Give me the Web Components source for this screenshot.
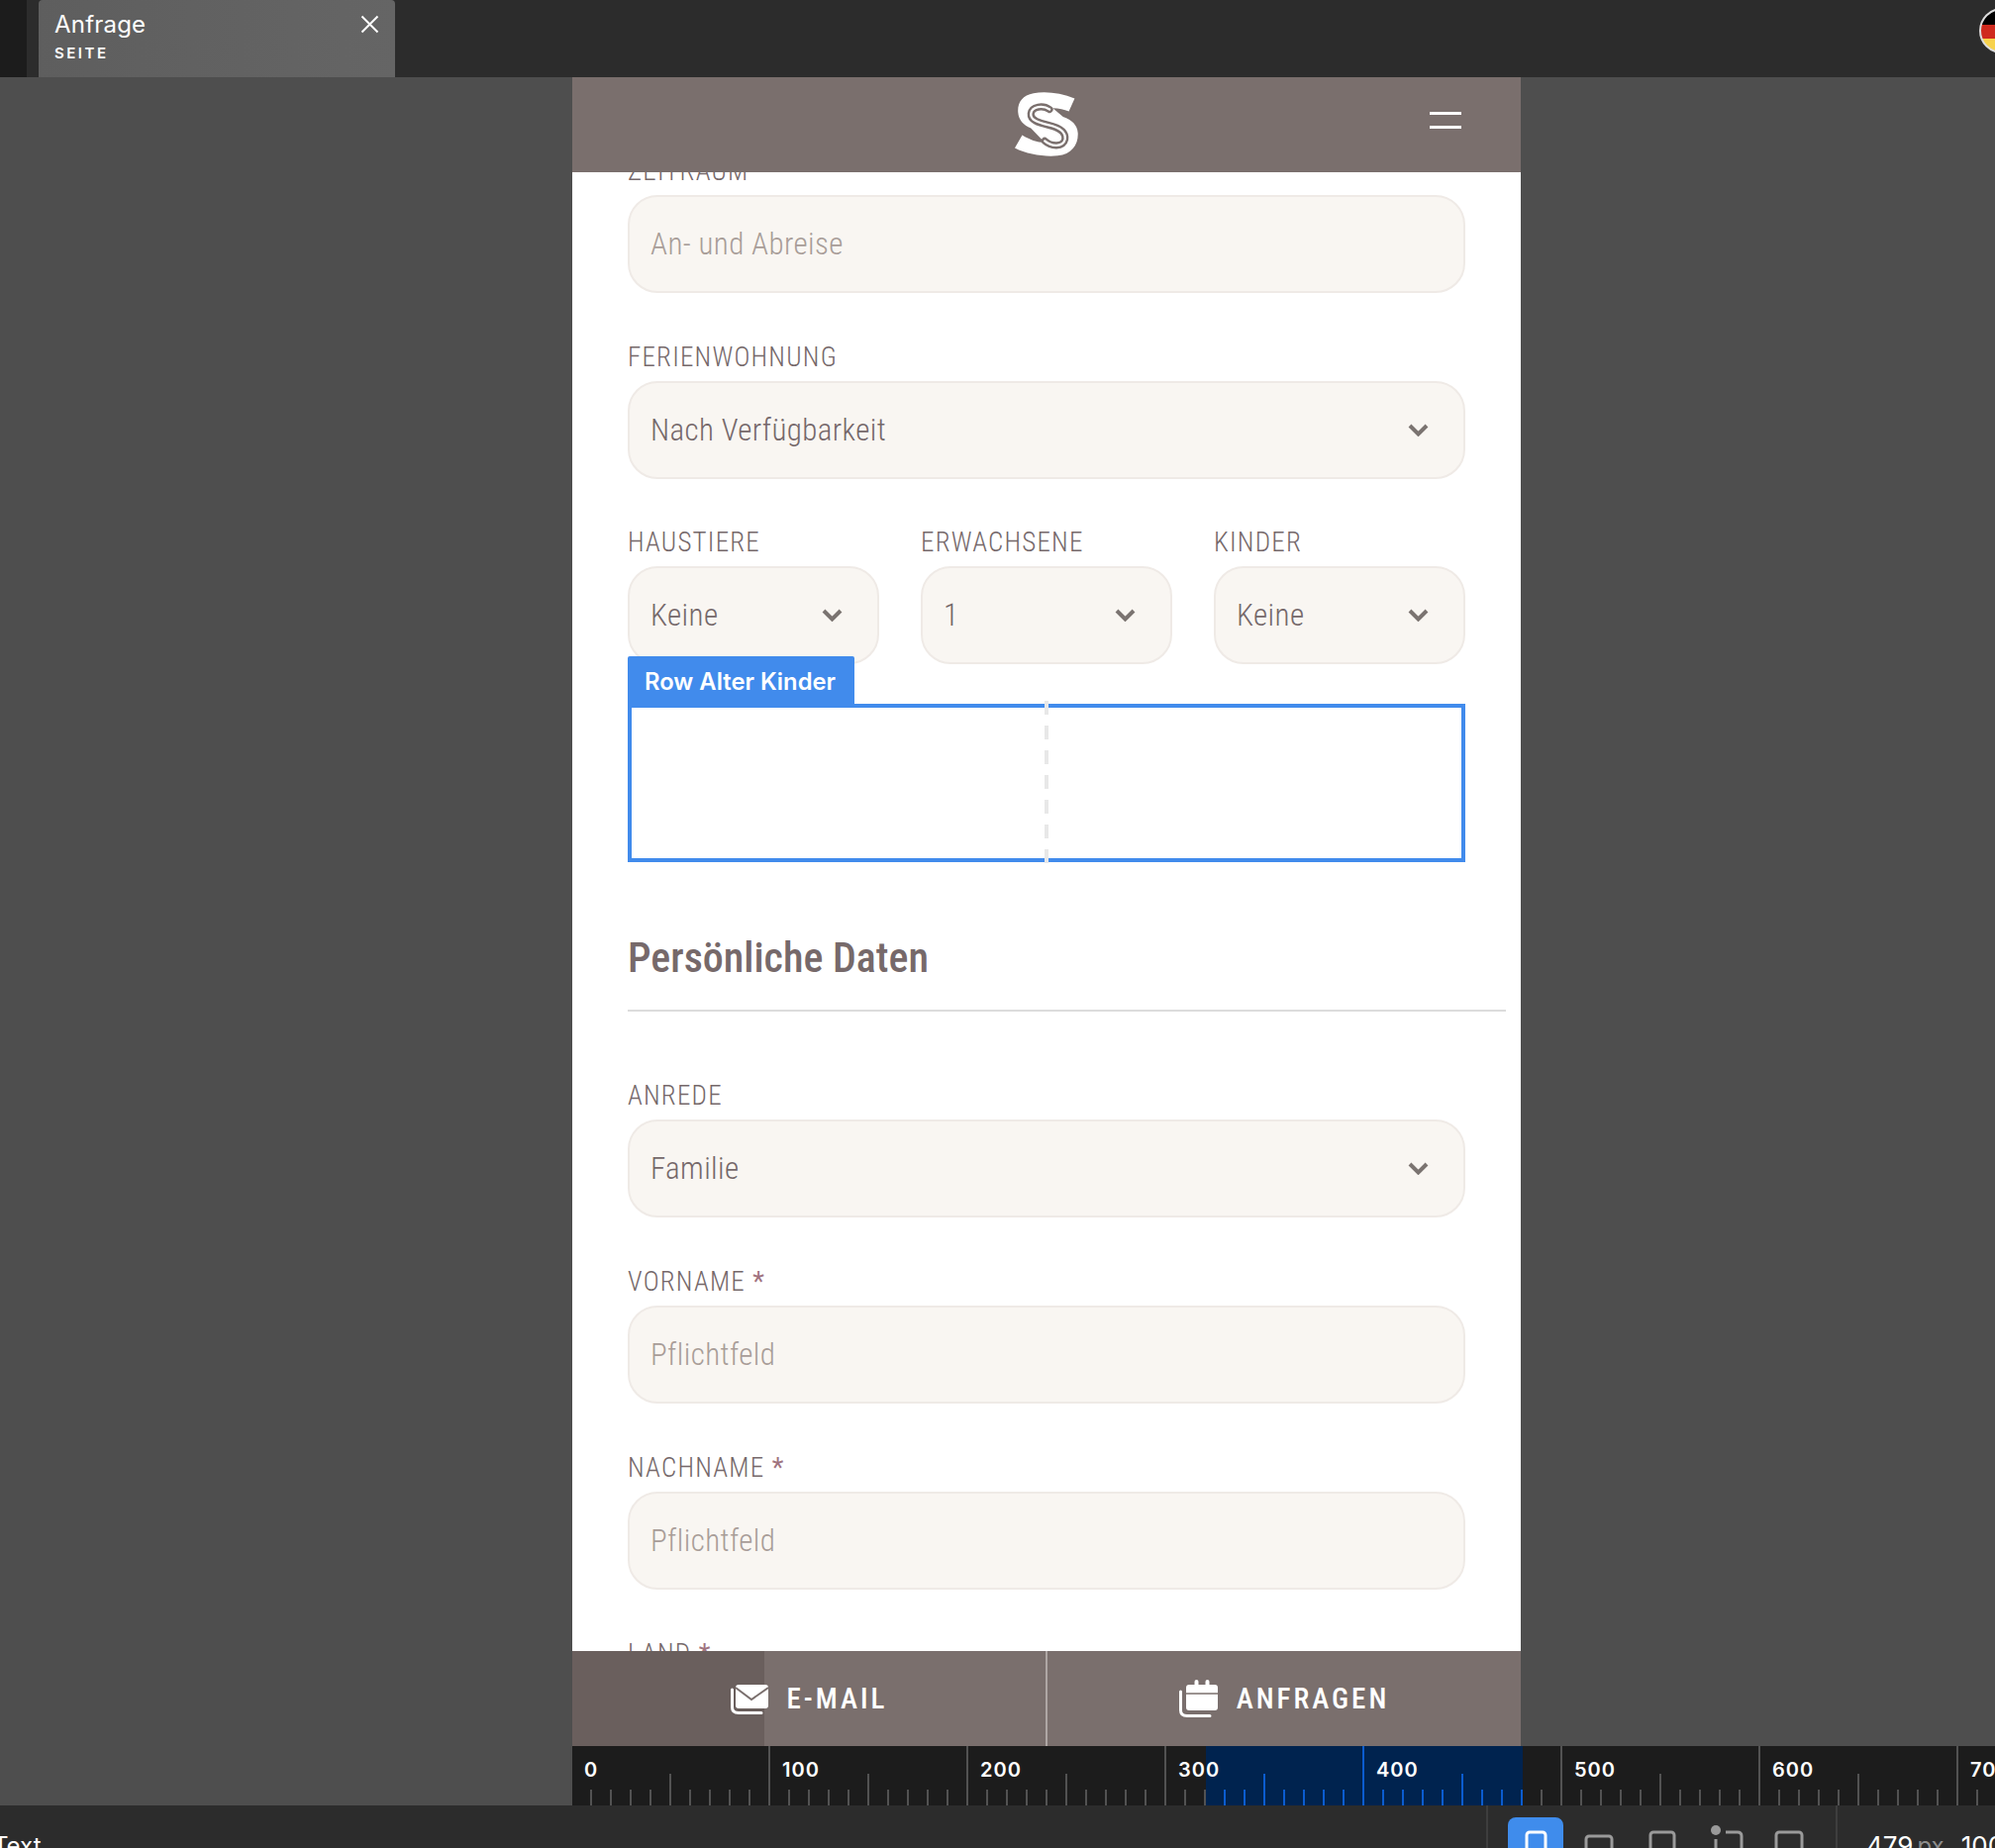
<!DOCTYPE html>
<html lang="de">
<head>
<meta charset="utf-8">
<title>Anfrage</title>
<style>
  html, body { margin: 0; padding: 0; background: #4e4e4e; overflow: hidden; }
</style>
</head>
<body>
<ds-editor>
  <ds-topbar slot="top">
    <ds-tab name="Anfrage" kind="SEITE"></ds-tab>
  </ds-topbar>
  <st-phone slot="phone">
    <st-field label="Zeitraum" placeholder="An- und Abreise"></st-field>
    <st-field label="Ferienwohnung" value="Nach Verfügbarkeit" select></st-field>
    <st-columns>
      <st-field label="Haustiere" value="Keine" select></st-field>
      <st-field label="Erwachsene" value="1" select></st-field>
      <st-field label="Kinder" value="Keine" select></st-field>
    </st-columns>
    <st-rowbox name="Row Alter Kinder"></st-rowbox>
    <st-heading>Persönliche Daten</st-heading>
    <st-field label="Anrede" value="Familie" select></st-field>
    <st-field label="Vorname" placeholder="Pflichtfeld" required></st-field>
    <st-field label="Nachname" placeholder="Pflichtfeld" required></st-field>
    <st-field label="Land" required></st-field>
  </st-phone>
  <ds-ruler slot="ruler"></ds-ruler>
  <ds-bottombar slot="bottom"></ds-bottombar>
</ds-editor>

<script>
const CONDENSED = `font-family: Roboto, 'Liberation Sans', sans-serif; font-stretch: 75%;`;
const UI_FONT = `font-family: Inter, 'Liberation Sans', sans-serif;`;

class Base extends HTMLElement {
  constructor() {
    super();
    this.attachShadow({ mode: "open" });
  }
  connectedCallback() {
    this.shadowRoot.innerHTML = `<style>${this.css()}</style>${this.html()}`;
  }
}

class DsEditor extends Base {
  css() {
    return `
      :host { display: flex; flex-direction: column; width: 2015px; height: 1867px; overflow: hidden; }
      .main { flex: 1; min-height: 0; display: flex; flex-direction: column; padding-left: 578px; background: #4e4e4e; }
    `;
  }
  html() {
    return `
      <slot name="top"></slot>
      <div class="main">
        <slot name="phone"></slot>
        <slot name="ruler"></slot>
      </div>
      <slot name="bottom"></slot>
    `;
  }
}

class DsTopbar extends Base {
  css() {
    return `
      :host { display: flex; height: 78px; flex: none; background: #2c2c2c; overflow: hidden; }
      .grip { width: 27px; background: #1c1c1c; margin-right: 12px; }
      svg { margin-left: auto; margin-top: 8px; margin-right: -30px; flex: none; }
    `;
  }
  html() {
    return `
      <div class="grip"></div>
      <slot></slot>
      <svg width="46" height="46" viewBox="0 0 46 46">
        <defs><clipPath id="c"><circle cx="23" cy="23" r="22"/></clipPath></defs>
        <g clip-path="url(#c)">
          <rect width="46" height="17" fill="#000"/>
          <rect y="17" width="46" height="14" fill="#cf2a1e"/>
          <rect y="31" width="46" height="15" fill="#f7d24c"/>
        </g>
        <circle cx="23" cy="23" r="22" fill="none" stroke="#dcdcdc" stroke-width="2"/>
      </svg>
    `;
  }
}

class DsTab extends Base {
  css() {
    return `
      :host { display: flex; justify-content: space-between; width: 360px; height: 78px; box-sizing: border-box;
        padding: 0 16px; background: linear-gradient(90deg, #5e5e5e, #656565);
        border-top-left-radius: 4px; border-top-right-radius: 4px; color: #fff; ${UI_FONT} }
      .name { font-size: 24px; line-height: 30px; margin-top: 10px; letter-spacing: 0.2px; }
      .kind { font-size: 15px; line-height: 18px; margin-top: 5px; font-weight: 600; letter-spacing: 2.5px; }
      svg { margin-top: 15px; }
    `;
  }
  html() {
    return `
      <div>
        <div class="name">${this.getAttribute("name")}</div>
        <div class="kind">${this.getAttribute("kind")}</div>
      </div>
      <svg width="19" height="19" viewBox="0 0 19 19"><path d="M1.5 1.5l16 16M17.5 1.5l-16 16" stroke="#fff" stroke-width="2" fill="none"/></svg>
    `;
  }
}

class StPhone extends Base {
  css() {
    return `
      :host { display: flex; flex-direction: column; flex: 1; min-height: 0; width: 958px; background: #fff; }
      header { flex: none; height: 96px; background: #7a6f6d; display: grid; grid-template-columns: 1fr auto 1fr; align-items: center; }
      .logo { grid-column: 2; margin-top: -1px; display: block; }
      .burger { grid-column: 3; justify-self: end; width: 32px; height: 17px; margin-right: 60px; margin-top: -10px;
        border-top: 3px solid #fff; border-bottom: 3px solid #fff; box-sizing: border-box; }
      .scroll { flex: 1; min-height: 0; overflow: hidden; }
      .form { display: flex; flex-direction: column; gap: 45px; padding: 0 56px; margin-top: -21px; }
      footer { flex: none; height: 96px; display: flex; color: #fff;
        background: linear-gradient(90deg, #6a5f5d 0 194px, #7a6f6d 194px); }
      .btn { flex: 1; display: flex; align-items: center; justify-content: center; gap: 19px;
        ${CONDENSED} font-size: 29px; font-weight: 500; letter-spacing: 3px; }
      .btn + .btn { border-left: 2px solid #aea7a5; }
    `;
  }
  html() {
    return `
      <header>
        <svg class="logo" width="64" height="67" viewBox="72 36 197 204">
          <path fill="#fff" d="M258 58C215 40 165 35 130 42C95 48 80 72 82 100C84 125 98 140 122 150L165 195C140 195 118 186 95 172L72 212C110 232 165 240 205 236C250 232 270 200 268 165C266 140 250 125 222 115L190 88C210 88 225 92 240 98Z"/>
          <path fill="none" stroke="#7a6f6d" stroke-width="22" stroke-linecap="round" d="M180 92C160 78 125 82 122 105C120 125 145 133 175 140C210 148 232 160 228 185C222 210 185 208 165 190"/>
          <path fill="none" stroke="#fff" stroke-width="7" stroke-linecap="round" d="M180 92C160 78 125 82 122 105C120 125 145 133 175 140C210 148 232 160 228 185C222 210 185 208 165 190"/>
        </svg>
        <div class="burger"></div>
      </header>
      <div class="scroll"><div class="form"><slot></slot></div></div>
      <footer>
        <div class="btn">
          <svg width="38" height="31" viewBox="0 0 38 31">
            <rect x="5" y="1" width="33" height="24" rx="3" fill="#fff"/>
            <path d="M5 4l16 12 17-12" fill="none" stroke="#7a6f6d" stroke-width="2"/>
            <path d="M1.5 6V24Q1.5 29.5 8 29.5H31" fill="none" stroke="#fff" stroke-width="3" stroke-linecap="round"/>
          </svg>
          <span>E-MAIL</span>
        </div>
        <div class="btn">
          <svg width="39" height="38" viewBox="0 0 39 38">
            <rect x="7" y="5" width="32" height="26" rx="3" fill="#fff"/>
            <rect x="15.5" y="0" width="4" height="9" rx="2" fill="#fff"/>
            <rect x="26.5" y="0" width="4" height="9" rx="2" fill="#fff"/>
            <path d="M7 14H39" stroke="#7a6f6d" stroke-width="1.5"/>
            <path d="M1.5 12V31Q1.5 36.5 8 36.5H31" fill="none" stroke="#fff" stroke-width="3" stroke-linecap="round"/>
          </svg>
          <span>ANFRAGEN</span>
        </div>
      </footer>
    `;
  }
}

class StField extends Base {
  css() {
    return `
      :host { display: block; ${CONDENSED} color: #75686a; }
      label { display: block; height: 40px; line-height: 40px; margin-bottom: 4px; font-size: 27px; font-weight: 300;
        letter-spacing: 1.2px; text-transform: uppercase; white-space: nowrap; }
      label b { font-weight: 400; color: #a0737f; }
      .box { display: flex; align-items: center; justify-content: space-between; height: 99px; box-sizing: border-box;
        padding: 0 35px 1px 21px; background: #f9f6f2; border: 2px solid #efeae6; border-radius: 30px;
        font-size: 31px; font-weight: 300; letter-spacing: 0.4px; white-space: nowrap; }
      .ph { color: #a89d98; }
      svg { flex: none; margin-top: 1px; }
    `;
  }
  html() {
    const label = this.getAttribute("label");
    const req = this.hasAttribute("required") ? ` <b>*</b>` : "";
    const text = this.getAttribute("value");
    const ph = this.getAttribute("placeholder") || "";
    const arrow = this.hasAttribute("select")
      ? `<svg width="21" height="13" viewBox="0 0 21 13"><path d="M2 2l8.5 8.5L19 2" fill="none" stroke="#7b7471" stroke-width="4"/></svg>`
      : "";
    return `
      <label>${label}${req}</label>
      <div class="box"><span class="${text ? "" : "ph"}">${text || ph}</span>${arrow}</div>
    `;
  }
}

class StColumns extends Base {
  css() {
    return `:host { display: grid; grid-template-columns: repeat(3, 1fr); column-gap: 42px; margin-top: -1px; }`;
  }
  html() { return `<slot></slot>`; }
}

class StRowbox extends Base {
  css() {
    return `
      :host { display: block; position: relative; height: 160px; box-sizing: border-box; margin-top: -5px;
        border: 4px solid #418bec; }
      .tab { position: absolute; left: -4px; top: -52px; height: 48px; line-height: 52px; padding: 0 19px 0 17px;
        background: #418bec; color: #fff; font-size: 23.8px; font-weight: 600; white-space: nowrap; ${UI_FONT}
        border-radius: 2px 2px 0 0; }
      .mid { position: absolute; left: 50%; top: -7px; bottom: -6px; margin-left: -2px; width: 4px;
        background: repeating-linear-gradient(180deg, #e8e8e8 0 14px, transparent 14px 25px); }
    `;
  }
  html() {
    return `<div class="tab">${this.getAttribute("name")}</div><div class="mid"></div>`;
  }
}

class StHeading extends Base {
  css() {
    return `
      :host { display: block; height: 106px; box-sizing: border-box; margin-bottom: 20px; margin-right: -41px;
        border-bottom: 2px solid #dcdcdc; padding-top: 23px; ${CONDENSED}
        font-size: 42px; line-height: 58px; font-weight: 500; color: #76696a; }
    `;
  }
  html() { return `<slot></slot>`; }
}

class DsRuler extends Base {
  css() {
    return `
      :host { display: block; position: relative; flex: none; height: 60px; width: 1437px; overflow: hidden; background: #1c1c1c; ${UI_FONT} }
      svg { position: absolute; left: 0; top: 0; }
      .labels { position: relative; display: flex; margin-left: -1px; }
      .labels span { flex: none; width: 200px; box-sizing: border-box; padding-left: 13px; padding-top: 12px;
        font-size: 20px; line-height: 24px; font-weight: 600; letter-spacing: 1px; color: #fff; }
    `;
  }
  html() {
    let lines = "";
    // selected range of the viewport, 2 px per ruler unit
    const from = 640, to = 960;
    for (let i = 0; i * 20 < 1460; i++) {
      const x = i * 20 - 1;
      const h = i % 10 === 0 ? 60 : i % 5 === 0 ? 32 : 16;
      const hot = x >= from && x <= to;
      lines += `<rect x="${x - 1}" y="${60 - h}" width="2" height="${h}" fill="${hot ? "#0b5ccf" : "#525252"}"/>`;
    }
    let labels = "";
    for (let n = 0; n <= 700; n += 100) labels += `<span>${n}</span>`;
    return `
      <svg width="1437" height="60">
        <rect x="${from}" width="${to - from}" height="60" fill="#00234f"/>
        ${lines}
      </svg>
      <div class="labels">${labels}</div>
    `;
  }
}

class DsBottombar extends Base {
  css() {
    return `
      :host { display: flex; flex: none; height: 43px; background: #2c2c2c; color: #fff; overflow: hidden; ${UI_FONT} font-size: 24px; }
      .mode { margin-left: -7px; margin-top: 26px; line-height: 30px; }
      .devices { margin-left: auto; width: 355px; box-sizing: border-box; display: flex; border-left: 2px solid #3e3e3e;
        border-right: 2px solid #3e3e3e; }
      .sizes { width: 159px; flex: none; display: flex; padding-left: 29px; box-sizing: border-box; margin-top: 26px; line-height: 30px; font-size: 26px; white-space: nowrap; }
      .sizes i { font-style: normal; color: #8c8c8c; margin: 0 17px 0 4px; font-size: 24px; }
      svg { display: block; }
    `;
  }
  html() {
    return `
      <div class="mode">Text</div>
      <div class="devices">
        <svg width="351" height="43" viewBox="0 0 351 43">
          <rect x="20" y="12" width="56" height="40" rx="8" fill="#3f8cec"/>
          <rect x="39" y="27" width="19" height="30" rx="3" fill="none" stroke="#fff" stroke-width="3"/>
          <rect x="99" y="31" width="26" height="30" rx="3" fill="none" stroke="#9a9a9a" stroke-width="3"/>
          <rect x="164" y="27" width="24" height="30" rx="3" fill="none" stroke="#9a9a9a" stroke-width="3"/>
          <circle cx="230" cy="25" r="5" fill="#9a9a9a"/>
          <path d="M240 27H252Q256 27 256 31V50M230 34V50" fill="none" stroke="#9a9a9a" stroke-width="3"/>
          <rect x="291" y="27" width="26" height="30" rx="3" fill="none" stroke="#9a9a9a" stroke-width="3"/>
        </svg>
      </div>
      <div class="sizes"><span>479</span><i>px</i><span>100</span></div>
    `;
  }
}

customElements.define("ds-editor", DsEditor);
customElements.define("ds-topbar", DsTopbar);
customElements.define("ds-tab", DsTab);
customElements.define("st-phone", StPhone);
customElements.define("st-field", StField);
customElements.define("st-columns", StColumns);
customElements.define("st-rowbox", StRowbox);
customElements.define("st-heading", StHeading);
customElements.define("ds-ruler", DsRuler);
customElements.define("ds-bottombar", DsBottombar);
</script>
</body>
</html>
